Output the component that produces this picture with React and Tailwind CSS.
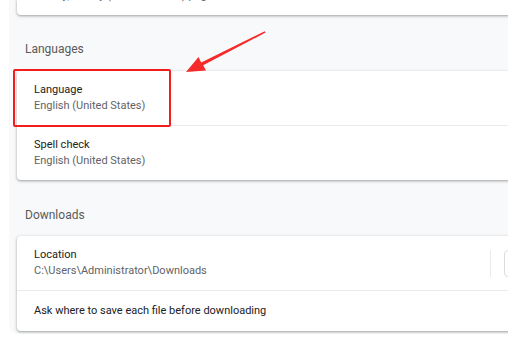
import React from "react";

const card =
  "bg-white rounded-[4px] shadow-[0_1px_2px_0_rgba(60,64,67,0.3),0_1px_3px_1px_rgba(60,64,67,0.15)] mr-[-12px]";

const Row = ({ title, sub, children, last }) => (
  <div className={`pl-[17px] flex items-center ${last ? "h-[54px]" : "h-[55px] border-b border-[#e8eaed]"}`}>
    <div className="flex-1 flex flex-col">
      <span className="text-[11px] leading-[16px] text-[#202124]">{title}</span>
      {sub && <span className="text-[11px] leading-[16px] text-[#5f6368]">{sub}</span>}
    </div>
    {children}
  </div>
);

const Heading = ({ children, pad }) => (
  <div className={`${pad} pl-[8px] text-[12px] leading-[16px] text-[#5a5a5a]`}>{children}</div>
);

export default function App() {
  return (
    <div className="relative w-[517px] h-[338px] bg-white overflow-hidden font-['Roboto','Liberation_Sans',sans-serif]">
      <div className="ml-[9px] w-[499px] h-[334px] bg-[#f8f9fa] rounded-bl-[10px] overflow-hidden pl-[8px]">
        {/* previous section, scrolled off */}
        <div className={`${card} h-[15px] rounded-t-none overflow-hidden`}>
          <div className="-mt-[12px] pl-[17px] text-[11px] leading-[16px] text-[#5f6368]">
            Strictly, on any (recommended) page
          </div>
        </div>

        <Heading pad="pt-[26px] pb-[14px]">Languages</Heading>
        <div className={card}>
          <Row title="Language" sub="English (United States)" />
          <Row title="Spell check" sub="English (United States)" last />
        </div>

        <Heading pad="pt-[27px] pb-[13px]">Downloads</Heading>
        <div className={card}>
          <Row title="Location" sub="C:\Users\Administrator\Downloads">
            <div className="w-px h-[27px] bg-[#e8eaed] mr-[13px]" />
            <div className="w-[60px] h-[27px] rounded-[4px] border border-[#dadce0] mr-[-44px]" />
          </Row>
          <div className="h-[40px] pl-[17px] flex items-center">
            <span className="text-[11px] leading-[16px] text-[#202124]">
              Ask where to save each file before downloading
            </span>
          </div>
        </div>
      </div>

      {/* annotation */}
      <div className="absolute left-[13px] top-[69px] w-[158px] h-[58px] border-2 border-[#f41d1d] rounded-[2px]" />
      <svg className="absolute left-0 top-0" width="517" height="338" viewBox="0 0 517 338">
        <polygon
          points="186,72 198.5,57 201.2,62.6 264.8,31.2 265.6,32.6 203.2,65.2 206,70.6"
          fill="#f52a2a"
        />
      </svg>
    </div>
  );
}
